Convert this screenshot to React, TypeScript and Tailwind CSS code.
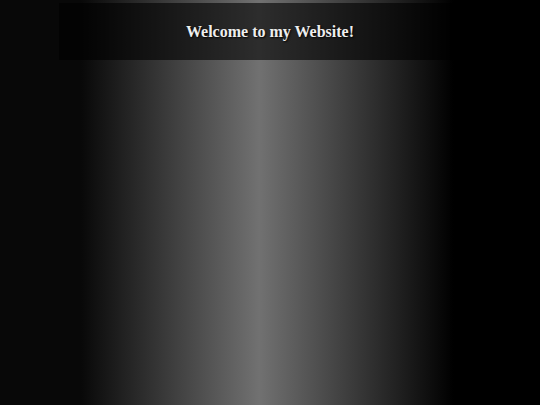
import React from 'react';

export default function App() {
  return (
    <div className="min-h-[405px] w-full bg-[linear-gradient(to_right,#080808_0%,#080808_15%,#717171_48%,#000000_84%,#000000_100%)] pt-[3px]">
      <header className="ml-[59px] flex h-[57px] w-[395px] items-center justify-center bg-black/60 pl-[27px]">
        <h1 className="font-['Liberation_Serif',serif] text-[16px] font-bold text-[#eeeeee] [text-shadow:1px_1px_2px_#000]">
          Welcome to my Website!
        </h1>
      </header>
    </div>
  );
}
